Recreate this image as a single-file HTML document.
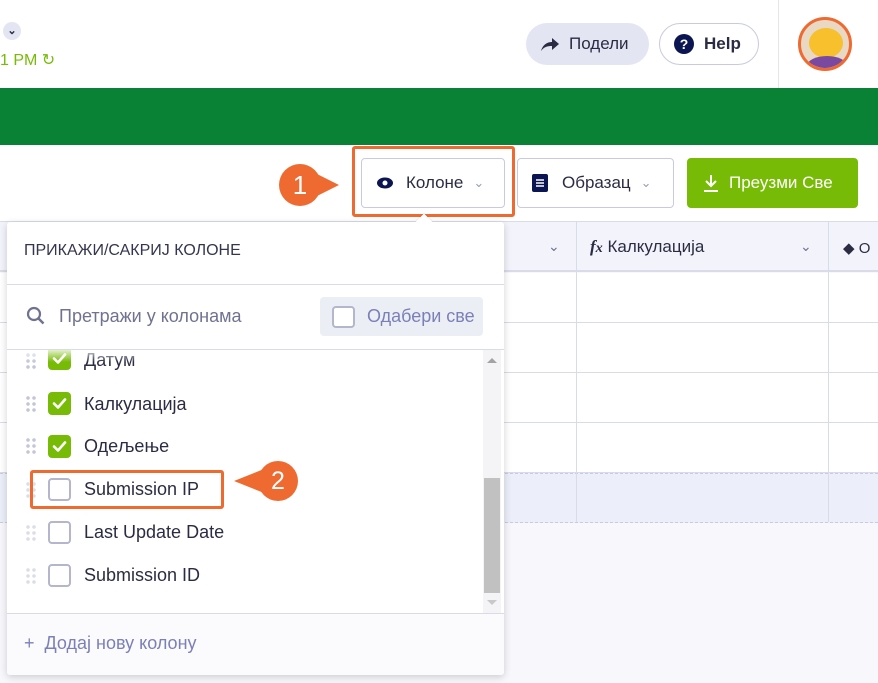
<!DOCTYPE html>
<html><head><meta charset="utf-8"><style>
*{box-sizing:border-box;margin:0;padding:0}
body{width:878px;height:683px;overflow:hidden;position:relative;background:#f8f8fc;font-family:"Liberation Sans",sans-serif;color:#2b2c43}
.abs{position:absolute}
.btn{position:absolute;border:1px solid #c8cbe0;border-radius:4px;background:#fff;display:flex;align-items:center;font-size:17px}
.row{position:absolute;left:0;width:878px;border-bottom:1px solid #d9dbe8;height:50px;background:#fff}
.cb{position:absolute;left:41px;width:23px;height:23px;border-radius:4px}
.cb.on{background:#78bb07}
.cb.off{border:2px solid #b3b6cc;background:#fff}
.item{position:absolute;left:77px;font-size:18px;color:#2b2c43}
.grip{position:absolute;left:18px;width:12px;height:18px;background:radial-gradient(circle,#c3c6d8 1.6px,transparent 2px) 0 0/6px 6px}
</style></head><body>
<div class="abs" style="left:0;top:0;width:878px;height:88px;background:#fff"></div>
<div class="abs" style="left:778px;top:0;width:1px;height:88px;background:#e4e5ee"></div>
<div class="abs" style="left:3px;top:22px;width:18px;height:18px;border-radius:50%;background:#e3e5f3;font-size:11px;text-align:center;line-height:18px;font-weight:bold;color:#2b2c43">⌄</div>
<div class="abs" style="left:0;top:50px;font-size:16px;color:#78bb07">1 PM ↻</div>
<div class="abs" style="left:526px;top:23px;width:123px;height:42px;border-radius:21px;background:#e3e5f3;font-size:17px;display:flex;align-items:center;padding-left:14px">
<svg width="20" height="16" viewBox="0 0 20 16"><path d="M1 15C3 8 8 6 12 6V2l7 6-7 6v-4C7 10 4 11 1 15z" fill="#2b2c43"/></svg><span style="margin-left:9px">Подели</span></div>
<div class="abs" style="left:659px;top:23px;width:100px;height:42px;border-radius:21px;border:1px solid #c8cbe0;background:#fff;font-size:17px;font-weight:bold;display:flex;align-items:center;padding-left:14px">
<span style="width:20px;height:20px;border-radius:50%;background:#0a1551;color:#fff;font-size:14px;text-align:center;line-height:20px">?</span><span style="margin-left:10px">Help</span></div>
<div class="abs" style="left:798px;top:17px;width:54px;height:54px;border-radius:50%;border:3px solid #ee6a30;background:#e9d8c3;overflow:hidden">
<div class="abs" style="left:8px;top:8px;width:34px;height:30px;border-radius:50%;background:#f7c02c"></div>
<div class="abs" style="left:6px;top:36px;width:40px;height:20px;border-radius:50% 50% 0 0;background:#7a4aa0"></div></div>
<div class="abs" style="left:0;top:88px;width:878px;height:57px;background:#0a8236"></div>
<div class="abs" style="left:0;top:145px;width:878px;height:77px;background:#fff"></div>
<div class="btn" style="left:361px;top:158px;width:144px;height:50px;padding-left:14px">
<svg width="18" height="12" viewBox="0 0 18 12"><ellipse cx="9" cy="6" rx="8" ry="5.5" fill="#0a1551"/><circle cx="9" cy="6" r="2.5" fill="#fff"/></svg><span style="margin-left:12px">Колоне</span><span style="margin-left:10px;color:#9a9db5;font-size:13px">⌄</span></div>
<div class="abs" style="left:352px;top:146px;width:163px;height:71px;border:3px solid #ee6a30;border-radius:3px"></div>
<div class="btn" style="left:517px;top:158px;width:157px;height:50px;padding-left:14px">
<svg width="16" height="18" viewBox="0 0 16 18"><rect width="16" height="18" rx="2" fill="#0a1551"/><path d="M4 6h8M4 9h8M4 12h8" stroke="#fff" stroke-width="1.5"/></svg><span style="margin-left:14px">Образац</span><span style="margin-left:10px;color:#9a9db5;font-size:13px">⌄</span></div>
<div class="abs" style="left:687px;top:158px;width:171px;height:50px;border-radius:4px;background:#78bb07;color:#fff;font-size:17px;display:flex;align-items:center;padding-left:16px">
<svg width="16" height="18" viewBox="0 0 16 18"><path d="M8 1v11M3 7l5 5 5-5M1 17h14" stroke="#fff" stroke-width="2" fill="none"/></svg><span style="margin-left:10px">Преузми Све</span></div>
<div class="abs" style="left:279px;top:164px;width:42px;height:42px;border-radius:50%;background:#ee6a30;color:#fff;font-size:26px;text-align:center;line-height:42px">1</div>
<div class="abs" style="left:313px;top:172px;width:0;height:0;border-top:13px solid transparent;border-bottom:13px solid transparent;border-left:26px solid #ee6a30"></div>
<div class="abs" style="left:0;top:221px;width:878px;height:51px;background:#f3f3fb;border-top:1px solid #d9dbe8;border-bottom:2px solid #d9dbe8"></div>
<div class="abs" style="left:548px;top:238px;font-size:14px;color:#6f7390">⌄</div>
<div class="abs" style="left:590px;top:237px;font-size:17px"><i style="font-family:'Liberation Serif';font-weight:bold">f<small>x</small></i> Калкулација</div>
<div class="abs" style="left:800px;top:238px;font-size:14px;color:#6f7390">⌄</div>
<div class="abs" style="left:843px;top:239px;font-size:15px">◆ О</div>
<div class="row" style="top:273px"></div><div class="row" style="top:323px"></div><div class="row" style="top:373px"></div><div class="row" style="top:423px"></div>
<div class="row" style="top:473px;background:#eceefa;border-top:1px dashed #c8cbe0;border-bottom:1px dashed #c8cbe0"></div>
<div class="abs" style="left:576px;top:221px;width:1px;height:301px;background:#d9dbe8"></div>
<div class="abs" style="left:828px;top:221px;width:1px;height:301px;background:#d9dbe8"></div>
<div class="abs" style="left:7px;top:222px;width:497px;height:453px;background:#fff;border-radius:3px;box-shadow:0 2px 8px rgba(0,0,0,.18)"></div>
<div class="abs" style="left:418px;top:216px;width:12px;height:12px;background:#fff;transform:rotate(45deg);box-shadow:-1px -1px 1px rgba(0,0,0,.06)"></div>
<div class="abs" style="left:24px;top:242px;font-size:16px;color:#343650">ПРИКАЖИ/САКРИЈ КОЛОНЕ</div>
<div class="abs" style="left:7px;top:284px;width:497px;height:1px;background:#d9dbe8"></div>
<svg class="abs" style="left:26px;top:306px" width="20" height="20" viewBox="0 0 20 20"><circle cx="8" cy="8" r="6" stroke="#6f7390" stroke-width="2.2" fill="none"/><path d="M12.5 12.5l5 5" stroke="#6f7390" stroke-width="2.5"/></svg>
<div class="abs" style="left:59px;top:306px;font-size:18px;color:#6f7390">Претражи у колонама</div>
<div class="abs" style="left:320px;top:297px;width:163px;height:39px;background:#eceef6;border-radius:4px"></div>
<div class="abs" style="left:332px;top:306px;width:23px;height:22px;border:2px solid #b3b6cc;border-radius:4px;background:#fff"></div>
<div class="abs" style="left:367px;top:306px;font-size:18px;color:#7b80b7">Одабери све</div>
<div class="abs" style="left:7px;top:349px;width:497px;height:1px;background:#d9dbe8"></div>
<div class="abs" style="left:7px;top:350px;width:497px;height:263px;overflow:hidden">
 <div class="grip" style="top:2px"></div><div class="cb on" style="top:-3px"><svg width="23" height="23" viewBox="0 0 23 23"><path d="M6 11.5l4 4 7-8" stroke="#fff" stroke-width="2.6" fill="none" stroke-linecap="round" stroke-linejoin="round"/></svg></div><div class="item" style="top:0">Датум</div>
 <div class="grip" style="top:45px"></div><div class="cb on" style="top:42px"><svg width="23" height="23" viewBox="0 0 23 23"><path d="M6 11.5l4 4 7-8" stroke="#fff" stroke-width="2.6" fill="none" stroke-linecap="round" stroke-linejoin="round"/></svg></div><div class="item" style="top:44px">Калкулација</div>
 <div class="grip" style="top:87px"></div><div class="cb on" style="top:85px"><svg width="23" height="23" viewBox="0 0 23 23"><path d="M6 11.5l4 4 7-8" stroke="#fff" stroke-width="2.6" fill="none" stroke-linecap="round" stroke-linejoin="round"/></svg></div><div class="item" style="top:86px">Одељење</div>
 <div class="grip" style="top:131px;opacity:.6"></div><div class="cb off" style="top:128px"></div><div class="item" style="top:129px">Submission IP</div>
 <div class="grip" style="top:174px;opacity:.6"></div><div class="cb off" style="top:171px"></div><div class="item" style="top:172px">Last Update Date</div>
 <div class="grip" style="top:217px;opacity:.6"></div><div class="cb off" style="top:214px"></div><div class="item" style="top:215px">Submission ID</div>
 <div class="abs" style="left:476px;top:0;width:18px;height:263px;background:#f4f4f6"></div>
 <div class="abs" style="left:477px;top:128px;width:16px;height:115px;background:#c1c1c1"></div>
 <div class="abs" style="left:480px;top:8px;border-left:5px solid transparent;border-right:5px solid transparent;border-bottom:5px solid #a3a3a3"></div>
 <div class="abs" style="left:480px;top:250px;border-left:5px solid transparent;border-right:5px solid transparent;border-top:5px solid #c8c8c8"></div>
</div>
<div class="abs" style="left:8px;top:350px;width:470px;height:12px;background:linear-gradient(rgba(255,255,255,.8),rgba(255,255,255,0))"></div>
<div class="abs" style="left:30px;top:470px;width:194px;height:39px;border:3px solid #ee6a30;border-radius:3px"></div>
<div class="abs" style="left:258px;top:461px;width:40px;height:40px;border-radius:50%;background:#ee6a30;color:#fff;font-size:25px;text-align:center;line-height:40px">2</div>
<div class="abs" style="left:234px;top:469px;width:0;height:0;border-top:12px solid transparent;border-bottom:12px solid transparent;border-right:30px solid #ee6a30"></div>
<div class="abs" style="left:7px;top:613px;width:497px;height:62px;background:#fbfbfd;border-top:1px solid #d9dbe8;border-radius:0 0 3px 3px"></div>
<div class="abs" style="left:24px;top:633px;font-size:18px;color:#7b80b7">+&nbsp;&nbsp;Додај нову колону</div>
</body></html>
